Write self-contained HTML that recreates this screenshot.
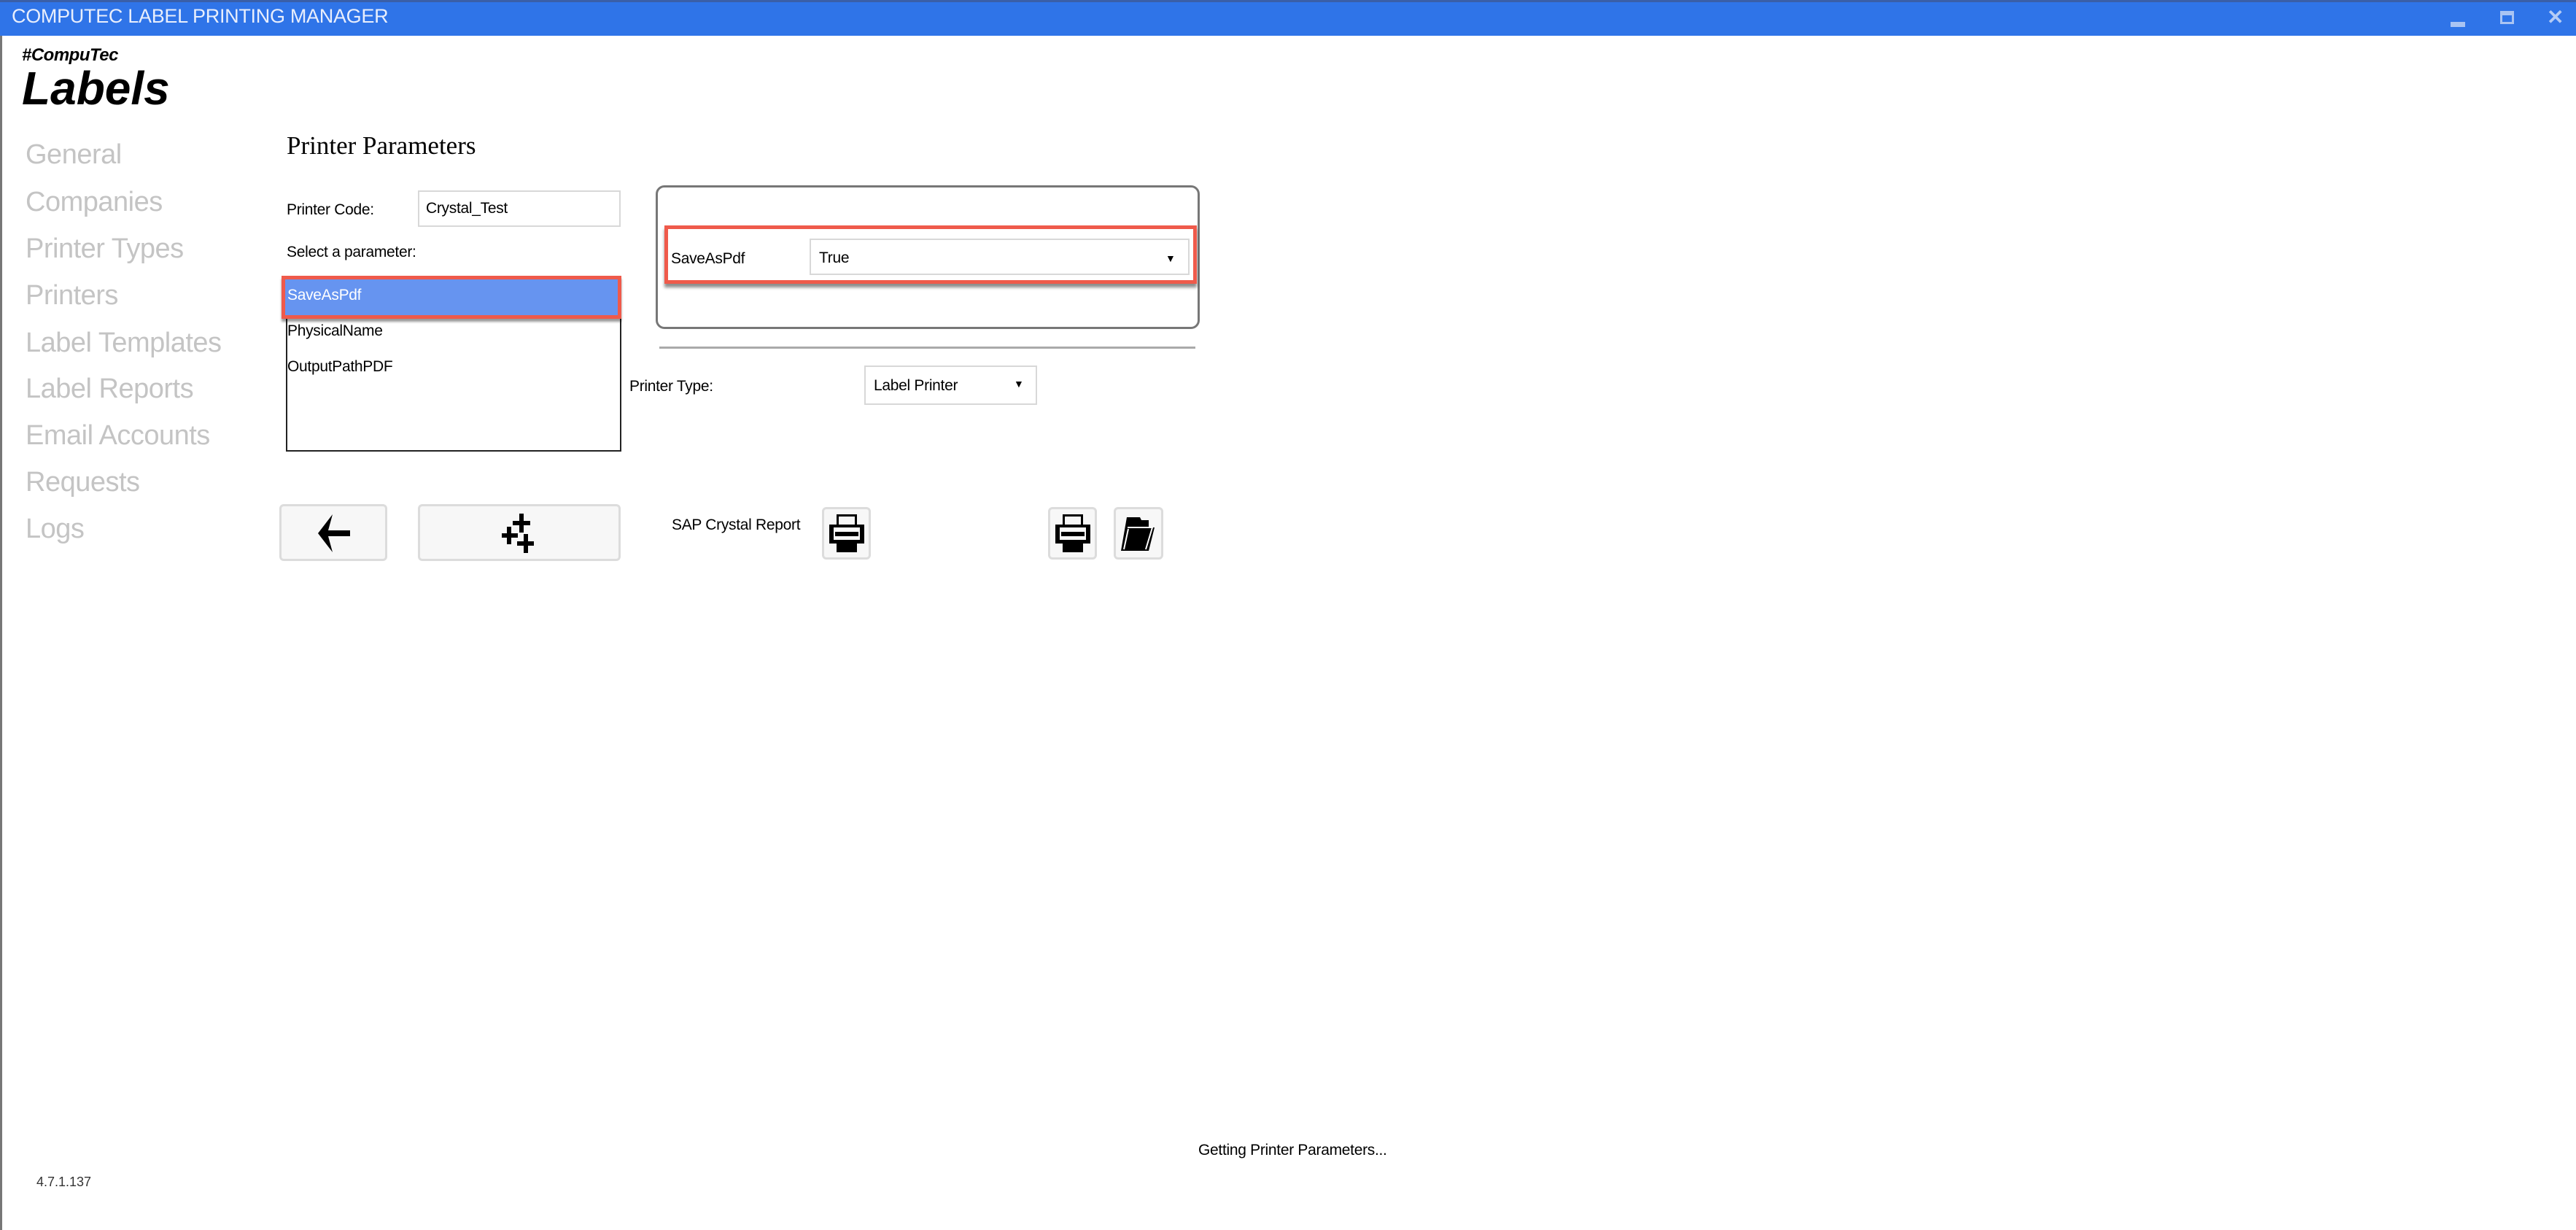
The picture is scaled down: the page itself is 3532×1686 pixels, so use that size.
<!DOCTYPE html>
<html><head><meta charset="utf-8"><style>
*{margin:0;padding:0;box-sizing:border-box}
body{width:3532px;height:1686px;background:#fff;position:relative;overflow:hidden;font-family:"Liberation Sans",sans-serif;color:#000}
.a{position:absolute;white-space:nowrap}
.nav{position:absolute;left:35px;font-size:38px;color:#c4c4c4;line-height:1;letter-spacing:-0.5px}
.lbl{font-size:21px;line-height:1;letter-spacing:-0.3px}
.btn{position:absolute;background:#f7f7f7;border:3px solid #dcdcdc;border-radius:6px}
</style></head><body>
<div class="a" style="left:0;top:0;width:3532px;height:49px;background:#2f74e8;border-top:3px solid #3a5fa8"></div>
<div class="a" style="left:16px;top:9px;font-size:27px;color:#e8eefc;line-height:1;letter-spacing:-0.3px">COMPUTEC LABEL PRINTING MANAGER</div>
<div class="a" style="left:3360px;top:30px;width:20px;height:7px;background:#a9c4f3"></div>
<div class="a" style="left:3428px;top:15px;width:19px;height:18px;border:3px solid #a9c4f3;border-top-width:6px"></div>
<div class="a" style="left:3492px;top:10px;font-size:28px;color:#b5ccf5;font-weight:bold;line-height:1">✕</div>
<div class="a" style="left:0;top:49px;width:3px;height:1637px;background:#777"></div>

<div class="a" style="left:30px;top:64px;font-size:24px;font-weight:bold;font-style:italic;line-height:1;letter-spacing:-0.5px">#CompuTec</div>
<div class="a" style="left:30px;top:89px;font-size:64px;font-weight:bold;font-style:italic;line-height:1">Labels</div>

<div class="nav" style="top:193px">General</div>
<div class="nav" style="top:258px">Companies</div>
<div class="nav" style="top:322px">Printer Types</div>
<div class="nav" style="top:386px">Printers</div>
<div class="nav" style="top:451px">Label Templates</div>
<div class="nav" style="top:514px">Label Reports</div>
<div class="nav" style="top:578px">Email Accounts</div>
<div class="nav" style="top:642px">Requests</div>
<div class="nav" style="top:706px">Logs</div>

<div class="a" style="left:393px;top:182px;font-family:'Liberation Serif',serif;font-size:35px;line-height:1">Printer Parameters</div>
<div class="a lbl" style="left:393px;top:277px">Printer Code:</div>
<div class="a" style="left:573px;top:261px;width:278px;height:50px;border:2px solid #d8d8d8"></div>
<div class="a lbl" style="left:584px;top:275px">Crystal_Test</div>
<div class="a lbl" style="left:393px;top:335px">Select a parameter:</div>

<div class="a" style="left:392px;top:380px;width:460px;height:239px;border:2px solid #222"></div>
<div class="a" style="left:386px;top:378px;width:466px;height:59px;border:5px solid #ef5a4b;background:#6694f0;box-shadow:0 4px 3px rgba(0,0,0,.4)"></div>
<div class="a lbl" style="left:394px;top:394px;color:#fff">SaveAsPdf</div>
<div class="a lbl" style="left:394px;top:443px">PhysicalName</div>
<div class="a lbl" style="left:394px;top:492px">OutputPathPDF</div>

<div class="a" style="left:899px;top:254px;width:746px;height:197px;border:3px solid #777;border-radius:12px"></div>
<div class="a" style="left:911px;top:309px;width:730px;height:80px;border:5px solid #ef5a4b;box-shadow:0 5px 4px rgba(0,0,0,.45)"></div>
<div class="a lbl" style="left:920px;top:344px">SaveAsPdf</div>
<div class="a" style="left:1110px;top:327px;width:521px;height:50px;border:2px solid #d8d8d8"></div>
<div class="a lbl" style="left:1123px;top:343px">True</div>
<div class="a" style="left:1598px;top:347px;font-size:14px;line-height:1">▼</div>

<div class="a" style="left:904px;top:475px;width:735px;height:3px;background:#aaa"></div>
<div class="a lbl" style="left:863px;top:519px">Printer Type:</div>
<div class="a" style="left:1185px;top:501px;width:237px;height:54px;border:2px solid #d8d8d8"></div>
<div class="a lbl" style="left:1198px;top:518px">Label Printer</div>
<div class="a" style="left:1390px;top:519px;font-size:14px;line-height:1">▼</div>

<div class="btn" style="left:383px;top:691px;width:148px;height:78px"></div>
<svg class="a" style="left:430px;top:705px" width="54" height="52" viewBox="0 0 54 52"><path d="M26 0 L6 26 L26 52 L20 30 L50 30 L50 22 L20 22 Z" fill="#000"/></svg>
<div class="btn" style="left:573px;top:691px;width:278px;height:78px"></div>
<svg class="a" style="left:688px;top:704px" width="52" height="54" viewBox="0 0 52 54"><path d="M24 0h6v10h9v6h-9v10h-6v-10h-9v-6h9z M7 18h6v9h9v6h-9v9h-6v-9h-7v-6h7z M30 28h6v10h8v6h-8v10h-6v-10h-9v-6h9z" fill="#000"/></svg>

<div class="a lbl" style="left:921px;top:709px">SAP Crystal Report</div>
<div class="btn" style="left:1127px;top:695px;width:67px;height:72px"></div>
<div class="btn" style="left:1437px;top:695px;width:67px;height:72px"></div>
<div class="btn" style="left:1527px;top:695px;width:68px;height:72px"></div>
<svg class="a" style="left:1135px;top:705px" width="52" height="52" viewBox="0 0 52 52"><path d="M12 0h28v14h10v26h-10v12h-28v-12h-10v-26h10z M15 3v11h22v-11z M8 18v17h36v-17z" fill="#000" fill-rule="evenodd"/><rect x="10" y="24" width="32" height="6" fill="#000"/><rect x="12" y="21" width="28" height="2" fill="#fff"/></svg>
<svg class="a" style="left:1445px;top:705px" width="52" height="52" viewBox="0 0 52 52"><path d="M12 0h28v14h10v26h-10v12h-28v-12h-10v-26h10z M15 3v11h22v-11z M8 18v17h36v-17z" fill="#000" fill-rule="evenodd"/><rect x="10" y="24" width="32" height="6" fill="#000"/><rect x="12" y="21" width="28" height="2" fill="#fff"/></svg>
<svg class="a" style="left:1535px;top:705px" width="52" height="52" viewBox="0 0 52 52"><path d="M10 4h18l2 4h10v10h8l-8 32h-38z" fill="#000"/><path d="M11 18h34l-9 30" fill="none" stroke="#fff" stroke-width="2"/><path d="M12 20l-6 28" stroke="#fff" stroke-width="2"/></svg>

<div class="a lbl" style="left:1643px;top:1566px">Getting Printer Parameters...</div>
<div class="a" style="left:50px;top:1611px;font-size:18px;color:#333;line-height:1">4.7.1.137</div>
</body></html>
